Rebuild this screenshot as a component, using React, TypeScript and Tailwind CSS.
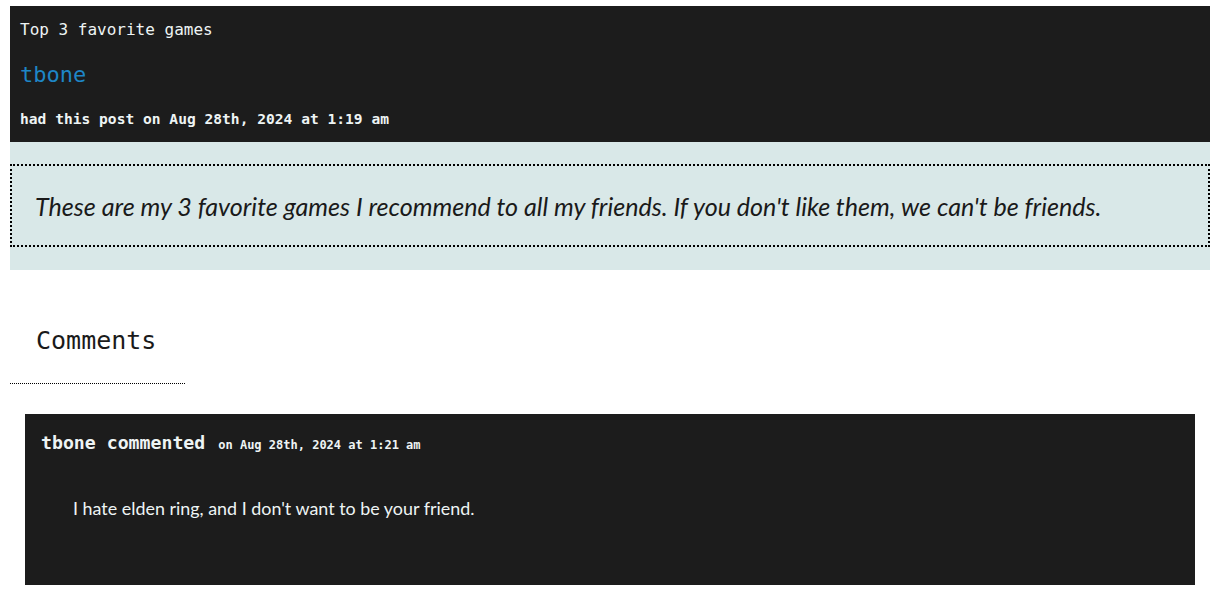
export default function App() {
  return (
    <div className="min-h-screen bg-white pl-[10px] pr-[11px] pt-[6px] font-['DejaVu_Sans_Mono',monospace]">
      {/* post header */}
      <header className="bg-[#1c1c1c] px-[10px] pt-[14px] pb-[13px] text-[#eef4f4]">
        <p className="text-[16px] leading-[20px]">Top 3 favorite games</p>
        <h2 className="mt-[21px] text-[22px] leading-[28px] text-[#1e86c6]">tbone</h2>
        <p className="mt-[20px] text-[14.6px] leading-[20px] font-bold">
          had this post on Aug 28th, 2024 at 1:19 am
        </p>
      </header>

      {/* post body */}
      <section className="bg-[#d9e8e8] pt-[22px] pb-[23px]">
        <div className="border-2 border-dotted border-black px-[23px] pt-[24px] pb-[23px]">
          <p className="font-['Lato',sans-serif] text-[25.1px] leading-[32px] italic text-[#1a1a1a]">
            These are my 3 favorite games I recommend to all my friends. If you don't like them, we can't be friends.
          </p>
        </div>
      </section>

      {/* comments */}
      <h3 className="mt-[56px] pl-[26px] text-[25px] leading-[30px] text-[#1a1a1a]">Comments</h3>
      <div className="mt-[27px] w-[175px] border-t border-dotted border-black" />

      <div className="mx-[15px] mt-[30px] h-[171px] bg-[#1c1c1c] pl-[16px] pt-[18px] text-[#eef4f4]">
        <div className="flex items-baseline gap-[13px]">
          <span className="text-[18.2px] leading-[22px] font-bold">tbone commented</span>
          <span className="text-[12px] font-bold">on Aug 28th, 2024 at 1:21 am</span>
        </div>
        <p className="mt-[42px] pl-[32px] font-['Lato',sans-serif] text-[17.9px] leading-[24px]">
          I hate elden ring, and I don't want to be your friend.
        </p>
      </div>
    </div>
  );
}
